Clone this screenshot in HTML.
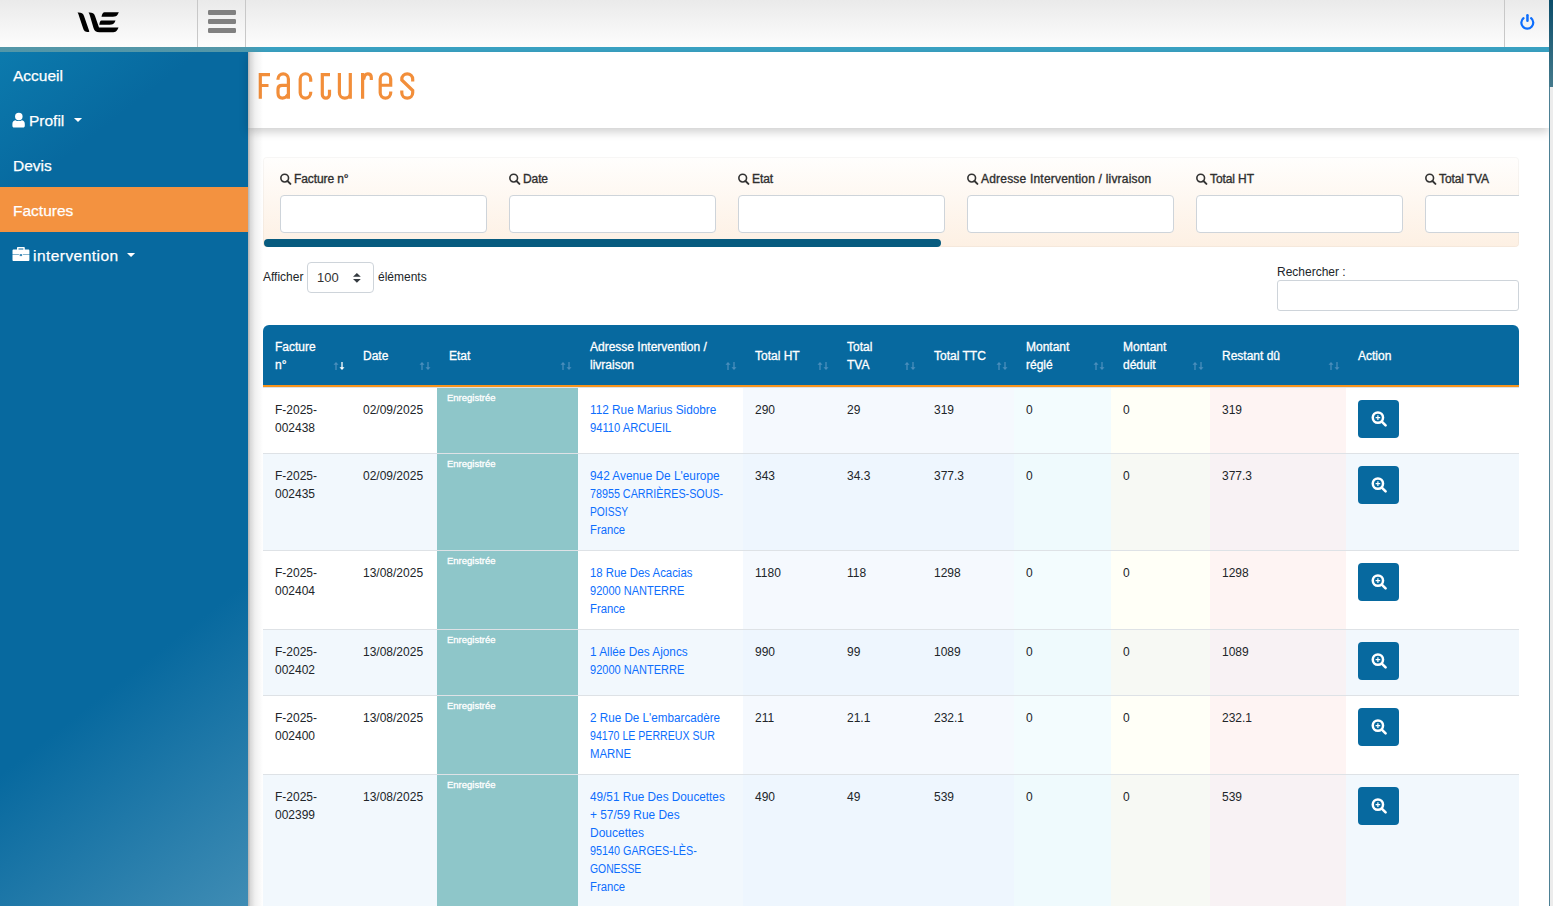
<!DOCTYPE html>
<html><head><meta charset="utf-8">
<style>
*{box-sizing:border-box;margin:0;padding:0}
html,body{width:1553px;height:906px;overflow:hidden;background:#fff;font-family:"Liberation Sans",sans-serif;color:#212529;position:relative}
.a{position:absolute}
#top{left:0;top:0;width:1549px;height:47px;background:linear-gradient(#eaeaea,#fdfdfd)}
.vsep{top:0;width:1px;height:47px;background:#c8c8c8}
.hb{left:208px;width:28px;height:5px;border-radius:1.2px;background:#808080}
#tline{left:0;top:47px;width:1549px;height:5px;background:#3aa2c3}
#side{left:0;top:52px;width:248px;height:854px;background:linear-gradient(142deg,#0c7aad 0%,#07699f 15%,#07699f 69%,#3f8cb4 100%)}
.mi{left:0;width:248px;height:45px;color:#fff;font-size:15.5px;-webkit-text-stroke:0.25px #fff;line-height:45px;padding-left:13px;white-space:nowrap}
#scroll{left:1549px;top:0;width:4px;height:906px;background:#ececec;border-left:1px solid #4d8094}
#thumb{left:1549px;top:0;width:4px;height:87px;background:linear-gradient(#0b4d6a,#457a8c)}
#titlep{left:248px;top:52px;width:1301px;height:76px;background:#fff;box-shadow:0 4px 9px rgba(0,0,0,.19)}
#shadowL{left:248px;top:52px;width:16px;height:854px;background:linear-gradient(90deg,rgba(0,0,0,.3) 0,rgba(0,0,0,.15) 2.5px,rgba(0,0,0,.06) 7px,rgba(0,0,0,0) 15px)}
#filt{left:263px;top:157px;width:1256px;height:90px;background:linear-gradient(#fffefd,#fdf0e3);border-radius:4px;overflow:hidden;box-shadow:inset 0 0 0 1px rgba(0,0,0,.03)}
.flab{top:171px;font-size:12px;color:#2f2f2f;-webkit-text-stroke:0.35px #2f2f2f;letter-spacing:-0.1px;white-space:nowrap;height:16px;line-height:16px}
.finp{top:195px;width:207px;height:38px;background:#fff;border:1px solid #ced4da;border-radius:4px}
#hscroll{left:264px;top:239px;width:677px;height:8px;border-radius:4px;background:#075b7f}
.txt{font-size:12px;white-space:nowrap}
#sel{left:307px;top:262px;width:67px;height:31px;border:1px solid #ced4da;border-radius:4px;background:#fff}
#srch{left:1277px;top:280px;width:242px;height:31px;border:1px solid #ced4da;border-radius:3px;background:#fff}
#thead{left:263px;top:325px;width:1256px;height:60px;background:#07699f;border-radius:6px 6px 0 0}
#oline{left:263px;top:385px;width:1256px;height:2px;background:#f7941d}
.th{top:326px;height:60px;color:#fff;font-size:12px;-webkit-text-stroke:0.3px #fff;line-height:18px;display:flex;align-items:center;white-space:nowrap}
.sort{top:361px;font-size:11px;color:#5d9cc6;letter-spacing:-2px}
.row{left:263px;width:1256px;border-top:1px solid #dde3ea}
.cell{font-size:12px;line-height:18px;white-space:nowrap}
.lnk{color:#0d6efd}
.etat{width:141px;background:#8ec6c9;color:#fff;font-size:9.5px;-webkit-text-stroke:0.3px #fff;padding:3px 0 0 10px;line-height:13px}
.btn{width:41px;height:38px;background:#07699f;border-radius:4px}
</style></head><body>
<div class="a" id="top"></div>
<div class="a vsep" style="left:197px"></div>
<div class="a vsep" style="left:245px"></div>
<div class="a vsep" style="left:1504px"></div>
<div class="a hb" style="top:10px"></div>
<div class="a hb" style="top:19px"></div>
<div class="a hb" style="top:28px"></div>
<svg class="a" style="left:0;top:0" width="1553" height="47">
  <path d="M77.5,12.5 C81,12.3 83,13 84,16 L88.5,29 C89,31 90,32 88.5,32 C85,32 84,31 83,28 L79,16 C78.5,14 78,13 77.5,12.5Z" fill="#000"/>
  <path d="M88.5,12.5 C92,12.3 94,13 95,16 L99,27.5 L118.5,27.5 C117,31 116,32.2 112,32.2 L99.5,32.2 C96,32.2 94.5,31 93.5,28 L90,16 C89.5,14 89,13 88.5,12.5Z" fill="#000"/>
  <path d="M104.5,12.3 L118.8,12.3 C117.5,15.5 116.5,16.7 113,16.7 L101.5,16.7 C102,14 103,12.3 104.5,12.3Z" fill="#000"/>
  <path d="M101.5,20.6 L115.5,20.6 C114.3,23.6 113.3,24.7 110,24.7 L99.3,24.7 C99.8,22 100.3,20.6 101.5,20.6Z" fill="#000"/>
  <g fill="none" stroke="#0d6efd" stroke-width="2.2" stroke-linecap="round">
    <path d="M1523.5,18.1 A5.95,5.95 0 1 0 1531.1,18.1"/>
    <path d="M1527.45,15.2 V20.8" stroke-width="2.5"/>
  </g>
</svg>
<div class="a" id="tline"></div>
<div class="a" style="left:0;top:47px;width:270px;height:5px;background:linear-gradient(90deg,rgba(127,131,121,.36) 0,rgba(127,131,121,.36) 238px,rgba(127,131,121,0) 266px)"></div>
<div class="a" id="side"></div>
<div class="a mi" style="top:53px">Accueil</div>
<div class="a mi" style="top:98px;padding-left:29px">Profil</div>
<div class="a mi" style="top:143px">Devis</div>
<div class="a" style="left:0;top:187px;width:248px;height:45px;background:#f39240"></div>
<div class="a mi" style="top:188px">Factures</div>
<div class="a mi" style="top:233px;padding-left:33px;letter-spacing:0.45px">intervention</div>
<svg class="a" style="left:0;top:100px" width="248" height="170" viewBox="0 100 248 170">
  <g fill="#fff">
    <circle cx="18.8" cy="116.5" r="3.75"/>
    <path d="M15.3,120.3 C16.3,120.9 17.5,121.1 18.6,121.1 C19.7,121.1 20.9,120.9 22,120.3 C23.9,120.6 24.8,122 24.8,124 V125.9 C24.8,126.8 24.1,127.4 23.2,127.4 H14 C13.1,127.4 12.4,126.8 12.4,125.9 V124 C12.4,122 13.3,120.6 15.3,120.3Z"/>
    <path d="M73.9,117.9 H82.1 L78,122.1Z"/>
    <path d="M17,249.9 V248 C17,247.4 17.4,247 18,247 H23.8 C24.4,247 24.8,247.4 24.8,248 V249.9 H23.3 V248.4 H18.5 V249.9Z"/>
    <path d="M13.6,249.6 H28.3 C28.9,249.6 29.4,250.1 29.4,250.7 V254.1 H12.5 V250.7 C12.5,250.1 13,249.6 13.6,249.6Z"/>
    <path d="M12.5,254.5 H29.4 V260 C29.4,260.6 28.9,261 28.3,261 H13.6 C13,261 12.5,260.6 12.5,260Z"/>
    <rect x="18.9" y="253.4" width="4" height="3.4"/>
    <rect x="19.7" y="254.1" width="2.4" height="2" fill="#3f8ab8"/>
    <path d="M127,253 H135.1 L131.05,257.1Z"/>
  </g>
</svg>

<div class="a" id="titlep"></div>
<svg class="a" style="left:0;top:0" width="500" height="130">
  <g fill="none" stroke="#f28e3a" stroke-width="3.2" stroke-linejoin="miter">
    <path d="M260.3,98.8 V74.6 H270 M260.3,85.5 H268.5"/>
    <path d="M278,79.7 V79 A5.2,5.2 0 0 1 288.4,79 V98.8 M288.4,85.3 H282 Q278,85.3 278,89 V93 Q278,98.1 282.5,98.1 Q286,98.1 288.4,94"/>
    <path d="M310.7,81.7 V79 A5.25,5.25 0 0 0 300.2,79 V92.8 A5.25,5.25 0 0 0 310.7,92.8 V91.8"/>
    <path d="M322.3,73 V94.5 A3.6,3.6 0 0 0 329.5,94.5 V89.8 M322.3,74.6 H330"/>
    <path d="M339.4,73 V92.65 A5.45,5.45 0 0 0 350.3,92.65 M350.3,73 V98.8"/>
    <path d="M362.6,73 V98.8 M363.6,79.5 Q364.5,73.8 367.7,73.8 Q371.3,73.8 371.3,77.5 V80"/>
    <path d="M380.2,85.25 H390.7 V79 A5.25,5.25 0 0 0 380.2,79 V92.8 A5.25,5.25 0 0 0 390.7,92.8 V91.6"/>
    <path d="M412.7,81.4 V79.25 A5.45,5.45 0 0 0 401.8,79.25 V80 L412.7,90.5 V92.65 A5.45,5.45 0 0 1 401.8,92.65 V90.4"/>
  </g>
</svg>

<div class="a" id="filt"></div>
<svg class="a" style="left:280px;top:173px" width="12" height="12" viewBox="0 0 12 12"><circle cx="4.7" cy="5.1" r="3.85" fill="none" stroke="#333" stroke-width="1.6"/><path d="M7.5,8 L10.4,10.9" stroke="#333" stroke-width="1.9" stroke-linecap="round"/></svg>
<div class="a flab" style="left:294px">Facture n°</div>
<div class="a finp" style="left:280px;width:207px"></div>
<svg class="a" style="left:509px;top:173px" width="12" height="12" viewBox="0 0 12 12"><circle cx="4.7" cy="5.1" r="3.85" fill="none" stroke="#333" stroke-width="1.6"/><path d="M7.5,8 L10.4,10.9" stroke="#333" stroke-width="1.9" stroke-linecap="round"/></svg>
<div class="a flab" style="left:523px">Date</div>
<div class="a finp" style="left:509px;width:207px"></div>
<svg class="a" style="left:738px;top:173px" width="12" height="12" viewBox="0 0 12 12"><circle cx="4.7" cy="5.1" r="3.85" fill="none" stroke="#333" stroke-width="1.6"/><path d="M7.5,8 L10.4,10.9" stroke="#333" stroke-width="1.9" stroke-linecap="round"/></svg>
<div class="a flab" style="left:752px">Etat</div>
<div class="a finp" style="left:738px;width:207px"></div>
<svg class="a" style="left:967px;top:173px" width="12" height="12" viewBox="0 0 12 12"><circle cx="4.7" cy="5.1" r="3.85" fill="none" stroke="#333" stroke-width="1.6"/><path d="M7.5,8 L10.4,10.9" stroke="#333" stroke-width="1.9" stroke-linecap="round"/></svg>
<div class="a flab" style="left:981px;letter-spacing:0.2px">Adresse Intervention / livraison</div>
<div class="a finp" style="left:967px;width:207px"></div>
<svg class="a" style="left:1196px;top:173px" width="12" height="12" viewBox="0 0 12 12"><circle cx="4.7" cy="5.1" r="3.85" fill="none" stroke="#333" stroke-width="1.6"/><path d="M7.5,8 L10.4,10.9" stroke="#333" stroke-width="1.9" stroke-linecap="round"/></svg>
<div class="a flab" style="left:1210px">Total HT</div>
<div class="a finp" style="left:1196px;width:207px"></div>
<svg class="a" style="left:1425px;top:173px" width="12" height="12" viewBox="0 0 12 12"><circle cx="4.7" cy="5.1" r="3.85" fill="none" stroke="#333" stroke-width="1.6"/><path d="M7.5,8 L10.4,10.9" stroke="#333" stroke-width="1.9" stroke-linecap="round"/></svg>
<div class="a flab" style="left:1439px">Total TVA</div>
<div class="a finp" style="left:1425px;width:98px"></div>
<div class="a" style="left:1519px;top:157px;width:30px;height:90px;background:#fff"></div>

<div class="a" id="hscroll"></div>

<div class="a txt" style="left:263px;top:270px">Afficher</div>
<div class="a" id="sel"></div>
<div class="a txt" style="left:317px;top:270px;font-size:13px;color:#333">100</div>
<svg class="a" style="left:352px;top:272px" width="10" height="12" viewBox="0 0 10 12"><path d="M1,4.8 H8.8 L4.9,0.9Z M1,6.9 H8.8 L4.9,10.8Z" fill="#343a40"/></svg>
<div class="a txt" style="left:378px;top:270px">éléments</div>
<div class="a txt" style="left:1277px;top:265px">Rechercher :</div>
<div class="a" id="srch"></div>

<div class="a" id="thead"></div>
<div class="a" id="oline"></div>
<div class="a th" style="left:275px">Facture<br>n°</div>
<svg class="a" style="left:333px;top:361px" width="12" height="10" viewBox="0 0 12 10"><path d="M3,9 V2.6" stroke="#4a8ebc" stroke-width="1.3"/><path d="M0.5,3.7 L3,0.9 L5.5,3.7Z" fill="#4a8ebc"/><path d="M9,1 V7.4" stroke="#ffffff" stroke-width="1.3"/><path d="M6.5,6.3 L9,9.1 L11.5,6.3Z" fill="#ffffff"/></svg>
<div class="a th" style="left:363px">Date</div>
<svg class="a" style="left:419px;top:361px" width="12" height="10" viewBox="0 0 12 10"><path d="M3,9 V2.6" stroke="#4a8ebc" stroke-width="1.3"/><path d="M0.5,3.7 L3,0.9 L5.5,3.7Z" fill="#4a8ebc"/><path d="M9,1 V7.4" stroke="#4a8ebc" stroke-width="1.3"/><path d="M6.5,6.3 L9,9.1 L11.5,6.3Z" fill="#4a8ebc"/></svg>
<div class="a th" style="left:449px">Etat</div>
<svg class="a" style="left:560px;top:361px" width="12" height="10" viewBox="0 0 12 10"><path d="M3,9 V2.6" stroke="#4a8ebc" stroke-width="1.3"/><path d="M0.5,3.7 L3,0.9 L5.5,3.7Z" fill="#4a8ebc"/><path d="M9,1 V7.4" stroke="#4a8ebc" stroke-width="1.3"/><path d="M6.5,6.3 L9,9.1 L11.5,6.3Z" fill="#4a8ebc"/></svg>
<div class="a th" style="left:590px">Adresse Intervention /<br>livraison</div>
<svg class="a" style="left:725px;top:361px" width="12" height="10" viewBox="0 0 12 10"><path d="M3,9 V2.6" stroke="#4a8ebc" stroke-width="1.3"/><path d="M0.5,3.7 L3,0.9 L5.5,3.7Z" fill="#4a8ebc"/><path d="M9,1 V7.4" stroke="#4a8ebc" stroke-width="1.3"/><path d="M6.5,6.3 L9,9.1 L11.5,6.3Z" fill="#4a8ebc"/></svg>
<div class="a th" style="left:755px">Total HT</div>
<svg class="a" style="left:817px;top:361px" width="12" height="10" viewBox="0 0 12 10"><path d="M3,9 V2.6" stroke="#4a8ebc" stroke-width="1.3"/><path d="M0.5,3.7 L3,0.9 L5.5,3.7Z" fill="#4a8ebc"/><path d="M9,1 V7.4" stroke="#4a8ebc" stroke-width="1.3"/><path d="M6.5,6.3 L9,9.1 L11.5,6.3Z" fill="#4a8ebc"/></svg>
<div class="a th" style="left:847px">Total<br>TVA</div>
<svg class="a" style="left:904px;top:361px" width="12" height="10" viewBox="0 0 12 10"><path d="M3,9 V2.6" stroke="#4a8ebc" stroke-width="1.3"/><path d="M0.5,3.7 L3,0.9 L5.5,3.7Z" fill="#4a8ebc"/><path d="M9,1 V7.4" stroke="#4a8ebc" stroke-width="1.3"/><path d="M6.5,6.3 L9,9.1 L11.5,6.3Z" fill="#4a8ebc"/></svg>
<div class="a th" style="left:934px">Total TTC</div>
<svg class="a" style="left:996px;top:361px" width="12" height="10" viewBox="0 0 12 10"><path d="M3,9 V2.6" stroke="#4a8ebc" stroke-width="1.3"/><path d="M0.5,3.7 L3,0.9 L5.5,3.7Z" fill="#4a8ebc"/><path d="M9,1 V7.4" stroke="#4a8ebc" stroke-width="1.3"/><path d="M6.5,6.3 L9,9.1 L11.5,6.3Z" fill="#4a8ebc"/></svg>
<div class="a th" style="left:1026px">Montant<br>réglé</div>
<svg class="a" style="left:1093px;top:361px" width="12" height="10" viewBox="0 0 12 10"><path d="M3,9 V2.6" stroke="#4a8ebc" stroke-width="1.3"/><path d="M0.5,3.7 L3,0.9 L5.5,3.7Z" fill="#4a8ebc"/><path d="M9,1 V7.4" stroke="#4a8ebc" stroke-width="1.3"/><path d="M6.5,6.3 L9,9.1 L11.5,6.3Z" fill="#4a8ebc"/></svg>
<div class="a th" style="left:1123px">Montant<br>déduit</div>
<svg class="a" style="left:1192px;top:361px" width="12" height="10" viewBox="0 0 12 10"><path d="M3,9 V2.6" stroke="#4a8ebc" stroke-width="1.3"/><path d="M0.5,3.7 L3,0.9 L5.5,3.7Z" fill="#4a8ebc"/><path d="M9,1 V7.4" stroke="#4a8ebc" stroke-width="1.3"/><path d="M6.5,6.3 L9,9.1 L11.5,6.3Z" fill="#4a8ebc"/></svg>
<div class="a th" style="left:1222px">Restant dû</div>
<svg class="a" style="left:1328px;top:361px" width="12" height="10" viewBox="0 0 12 10"><path d="M3,9 V2.6" stroke="#4a8ebc" stroke-width="1.3"/><path d="M0.5,3.7 L3,0.9 L5.5,3.7Z" fill="#4a8ebc"/><path d="M9,1 V7.4" stroke="#4a8ebc" stroke-width="1.3"/><path d="M6.5,6.3 L9,9.1 L11.5,6.3Z" fill="#4a8ebc"/></svg>
<div class="a th" style="left:1358px">Action</div>

<div class="a" style="left:263px;top:387px;width:1256px;height:66px;background:#ffffff"></div>
<div class="a" style="left:743px;top:387px;width:92px;height:66px;background:#f5f9fe"></div>
<div class="a" style="left:835px;top:387px;width:87px;height:66px;background:#f5f9fe"></div>
<div class="a" style="left:922px;top:387px;width:92px;height:66px;background:#f5f9fe"></div>
<div class="a" style="left:1014px;top:387px;width:97px;height:66px;background:#f3fcfe"></div>
<div class="a" style="left:1111px;top:387px;width:99px;height:66px;background:#fffff7"></div>
<div class="a" style="left:1210px;top:387px;width:136px;height:66px;background:#fef4f3"></div>
<div class="a etat" style="left:437px;top:388px;height:65px">Enregistrée</div>
<div class="a" style="left:263px;top:387px;width:1256px;height:1px;background:#dee2e6"></div>
<div class="a cell" style="left:275px;top:401px">F-2025-<br>002438</div>
<div class="a cell" style="left:363px;top:401px">02/09/2025</div>
<div class="a cell lnk" style="left:590px;top:401px;transform:scaleX(0.9827);transform-origin:0 0">112 Rue Marius Sidobre</div>
<div class="a cell lnk" style="left:590px;top:419px;transform:scaleX(0.9327);transform-origin:0 0">94110 ARCUEIL</div>
<div class="a cell" style="left:755px;top:401px">290</div>
<div class="a cell" style="left:847px;top:401px">29</div>
<div class="a cell" style="left:934px;top:401px">319</div>
<div class="a cell" style="left:1026px;top:401px">0</div>
<div class="a cell" style="left:1123px;top:401px">0</div>
<div class="a cell" style="left:1222px;top:401px">319</div>
<div class="a btn" style="left:1358px;top:400px"></div>
<svg class="a" style="left:1358px;top:400px" width="41" height="38" viewBox="0 0 41 38"><circle cx="19.9" cy="17.6" r="5.15" fill="none" stroke="#fff" stroke-width="2.5"/><path d="M19.9,15.3 V19.9 M17.6,17.6 H22.2" stroke="#fff" stroke-width="1.2"/><path d="M23.8,21.6 L27.6,25.4" stroke="#fff" stroke-width="2.6" stroke-linecap="round"/></svg>
<div class="a" style="left:263px;top:453px;width:1256px;height:97px;background:#f2f8fd"></div>
<div class="a" style="left:743px;top:453px;width:92px;height:97px;background:#eef6fe"></div>
<div class="a" style="left:835px;top:453px;width:87px;height:97px;background:#eef6fe"></div>
<div class="a" style="left:922px;top:453px;width:92px;height:97px;background:#eef6fe"></div>
<div class="a" style="left:1014px;top:453px;width:97px;height:97px;background:#effafd"></div>
<div class="a" style="left:1111px;top:453px;width:99px;height:97px;background:#f7f9f4"></div>
<div class="a" style="left:1210px;top:453px;width:136px;height:97px;background:#f8f2f4"></div>
<div class="a etat" style="left:437px;top:454px;height:96px">Enregistrée</div>
<div class="a" style="left:263px;top:453px;width:1256px;height:1px;background:#dee2e6"></div>
<div class="a cell" style="left:275px;top:467px">F-2025-<br>002435</div>
<div class="a cell" style="left:363px;top:467px">02/09/2025</div>
<div class="a cell lnk" style="left:590px;top:467px;transform:scaleX(0.9854);transform-origin:0 0">942 Avenue De L'europe</div>
<div class="a cell lnk" style="left:590px;top:485px;transform:scaleX(0.8956);transform-origin:0 0">78955 CARRIÈRES-SOUS-</div>
<div class="a cell lnk" style="left:590px;top:503px;transform:scaleX(0.8548);transform-origin:0 0">POISSY</div>
<div class="a cell lnk" style="left:590px;top:521px;transform:scaleX(0.9395);transform-origin:0 0">France</div>
<div class="a cell" style="left:755px;top:467px">343</div>
<div class="a cell" style="left:847px;top:467px">34.3</div>
<div class="a cell" style="left:934px;top:467px">377.3</div>
<div class="a cell" style="left:1026px;top:467px">0</div>
<div class="a cell" style="left:1123px;top:467px">0</div>
<div class="a cell" style="left:1222px;top:467px">377.3</div>
<div class="a btn" style="left:1358px;top:466px"></div>
<svg class="a" style="left:1358px;top:466px" width="41" height="38" viewBox="0 0 41 38"><circle cx="19.9" cy="17.6" r="5.15" fill="none" stroke="#fff" stroke-width="2.5"/><path d="M19.9,15.3 V19.9 M17.6,17.6 H22.2" stroke="#fff" stroke-width="1.2"/><path d="M23.8,21.6 L27.6,25.4" stroke="#fff" stroke-width="2.6" stroke-linecap="round"/></svg>
<div class="a" style="left:263px;top:550px;width:1256px;height:79px;background:#ffffff"></div>
<div class="a" style="left:743px;top:550px;width:92px;height:79px;background:#f5f9fe"></div>
<div class="a" style="left:835px;top:550px;width:87px;height:79px;background:#f5f9fe"></div>
<div class="a" style="left:922px;top:550px;width:92px;height:79px;background:#f5f9fe"></div>
<div class="a" style="left:1014px;top:550px;width:97px;height:79px;background:#f3fcfe"></div>
<div class="a" style="left:1111px;top:550px;width:99px;height:79px;background:#fffff7"></div>
<div class="a" style="left:1210px;top:550px;width:136px;height:79px;background:#fef4f3"></div>
<div class="a etat" style="left:437px;top:551px;height:78px">Enregistrée</div>
<div class="a" style="left:263px;top:550px;width:1256px;height:1px;background:#dee2e6"></div>
<div class="a cell" style="left:275px;top:564px">F-2025-<br>002404</div>
<div class="a cell" style="left:363px;top:564px">13/08/2025</div>
<div class="a cell lnk" style="left:590px;top:564px;transform:scaleX(0.9476);transform-origin:0 0">18 Rue Des Acacias</div>
<div class="a cell lnk" style="left:590px;top:582px;transform:scaleX(0.918);transform-origin:0 0">92000 NANTERRE</div>
<div class="a cell lnk" style="left:590px;top:600px;transform:scaleX(0.9395);transform-origin:0 0">France</div>
<div class="a cell" style="left:755px;top:564px">1180</div>
<div class="a cell" style="left:847px;top:564px">118</div>
<div class="a cell" style="left:934px;top:564px">1298</div>
<div class="a cell" style="left:1026px;top:564px">0</div>
<div class="a cell" style="left:1123px;top:564px">0</div>
<div class="a cell" style="left:1222px;top:564px">1298</div>
<div class="a btn" style="left:1358px;top:563px"></div>
<svg class="a" style="left:1358px;top:563px" width="41" height="38" viewBox="0 0 41 38"><circle cx="19.9" cy="17.6" r="5.15" fill="none" stroke="#fff" stroke-width="2.5"/><path d="M19.9,15.3 V19.9 M17.6,17.6 H22.2" stroke="#fff" stroke-width="1.2"/><path d="M23.8,21.6 L27.6,25.4" stroke="#fff" stroke-width="2.6" stroke-linecap="round"/></svg>
<div class="a" style="left:263px;top:629px;width:1256px;height:66px;background:#f2f8fd"></div>
<div class="a" style="left:743px;top:629px;width:92px;height:66px;background:#eef6fe"></div>
<div class="a" style="left:835px;top:629px;width:87px;height:66px;background:#eef6fe"></div>
<div class="a" style="left:922px;top:629px;width:92px;height:66px;background:#eef6fe"></div>
<div class="a" style="left:1014px;top:629px;width:97px;height:66px;background:#effafd"></div>
<div class="a" style="left:1111px;top:629px;width:99px;height:66px;background:#f7f9f4"></div>
<div class="a" style="left:1210px;top:629px;width:136px;height:66px;background:#f8f2f4"></div>
<div class="a etat" style="left:437px;top:630px;height:65px">Enregistrée</div>
<div class="a" style="left:263px;top:629px;width:1256px;height:1px;background:#dee2e6"></div>
<div class="a cell" style="left:275px;top:643px">F-2025-<br>002402</div>
<div class="a cell" style="left:363px;top:643px">13/08/2025</div>
<div class="a cell lnk" style="left:590px;top:643px;transform:scaleX(0.9828);transform-origin:0 0">1 Allée Des Ajoncs</div>
<div class="a cell lnk" style="left:590px;top:661px;transform:scaleX(0.918);transform-origin:0 0">92000 NANTERRE</div>
<div class="a cell" style="left:755px;top:643px">990</div>
<div class="a cell" style="left:847px;top:643px">99</div>
<div class="a cell" style="left:934px;top:643px">1089</div>
<div class="a cell" style="left:1026px;top:643px">0</div>
<div class="a cell" style="left:1123px;top:643px">0</div>
<div class="a cell" style="left:1222px;top:643px">1089</div>
<div class="a btn" style="left:1358px;top:642px"></div>
<svg class="a" style="left:1358px;top:642px" width="41" height="38" viewBox="0 0 41 38"><circle cx="19.9" cy="17.6" r="5.15" fill="none" stroke="#fff" stroke-width="2.5"/><path d="M19.9,15.3 V19.9 M17.6,17.6 H22.2" stroke="#fff" stroke-width="1.2"/><path d="M23.8,21.6 L27.6,25.4" stroke="#fff" stroke-width="2.6" stroke-linecap="round"/></svg>
<div class="a" style="left:263px;top:695px;width:1256px;height:79px;background:#ffffff"></div>
<div class="a" style="left:743px;top:695px;width:92px;height:79px;background:#f5f9fe"></div>
<div class="a" style="left:835px;top:695px;width:87px;height:79px;background:#f5f9fe"></div>
<div class="a" style="left:922px;top:695px;width:92px;height:79px;background:#f5f9fe"></div>
<div class="a" style="left:1014px;top:695px;width:97px;height:79px;background:#f3fcfe"></div>
<div class="a" style="left:1111px;top:695px;width:99px;height:79px;background:#fffff7"></div>
<div class="a" style="left:1210px;top:695px;width:136px;height:79px;background:#fef4f3"></div>
<div class="a etat" style="left:437px;top:696px;height:78px">Enregistrée</div>
<div class="a" style="left:263px;top:695px;width:1256px;height:1px;background:#dee2e6"></div>
<div class="a cell" style="left:275px;top:709px">F-2025-<br>002400</div>
<div class="a cell" style="left:363px;top:709px">13/08/2025</div>
<div class="a cell lnk" style="left:590px;top:709px;transform:scaleX(0.9731);transform-origin:0 0">2 Rue De L'embarcadère</div>
<div class="a cell lnk" style="left:590px;top:727px;transform:scaleX(0.8825);transform-origin:0 0">94170 LE PERREUX SUR</div>
<div class="a cell lnk" style="left:590px;top:745px;transform:scaleX(0.9506);transform-origin:0 0">MARNE</div>
<div class="a cell" style="left:755px;top:709px">211</div>
<div class="a cell" style="left:847px;top:709px">21.1</div>
<div class="a cell" style="left:934px;top:709px">232.1</div>
<div class="a cell" style="left:1026px;top:709px">0</div>
<div class="a cell" style="left:1123px;top:709px">0</div>
<div class="a cell" style="left:1222px;top:709px">232.1</div>
<div class="a btn" style="left:1358px;top:708px"></div>
<svg class="a" style="left:1358px;top:708px" width="41" height="38" viewBox="0 0 41 38"><circle cx="19.9" cy="17.6" r="5.15" fill="none" stroke="#fff" stroke-width="2.5"/><path d="M19.9,15.3 V19.9 M17.6,17.6 H22.2" stroke="#fff" stroke-width="1.2"/><path d="M23.8,21.6 L27.6,25.4" stroke="#fff" stroke-width="2.6" stroke-linecap="round"/></svg>
<div class="a" style="left:263px;top:774px;width:1256px;height:146px;background:#f2f8fd"></div>
<div class="a" style="left:743px;top:774px;width:92px;height:146px;background:#eef6fe"></div>
<div class="a" style="left:835px;top:774px;width:87px;height:146px;background:#eef6fe"></div>
<div class="a" style="left:922px;top:774px;width:92px;height:146px;background:#eef6fe"></div>
<div class="a" style="left:1014px;top:774px;width:97px;height:146px;background:#effafd"></div>
<div class="a" style="left:1111px;top:774px;width:99px;height:146px;background:#f7f9f4"></div>
<div class="a" style="left:1210px;top:774px;width:136px;height:146px;background:#f8f2f4"></div>
<div class="a etat" style="left:437px;top:775px;height:145px">Enregistrée</div>
<div class="a" style="left:263px;top:774px;width:1256px;height:1px;background:#dee2e6"></div>
<div class="a cell" style="left:275px;top:788px">F-2025-<br>002399</div>
<div class="a cell" style="left:363px;top:788px">13/08/2025</div>
<div class="a cell lnk" style="left:590px;top:788px;transform:scaleX(0.9809);transform-origin:0 0">49/51 Rue Des Doucettes</div>
<div class="a cell lnk" style="left:590px;top:806px;transform:scaleX(0.991);transform-origin:0 0">+ 57/59 Rue Des</div>
<div class="a cell lnk" style="left:590px;top:824px;transform:scaleX(1.0);transform-origin:0 0">Doucettes</div>
<div class="a cell lnk" style="left:590px;top:842px;transform:scaleX(0.8995);transform-origin:0 0">95140 GARGES-LÈS-</div>
<div class="a cell lnk" style="left:590px;top:860px;transform:scaleX(0.8642);transform-origin:0 0">GONESSE</div>
<div class="a cell lnk" style="left:590px;top:878px;transform:scaleX(0.9395);transform-origin:0 0">France</div>
<div class="a cell" style="left:755px;top:788px">490</div>
<div class="a cell" style="left:847px;top:788px">49</div>
<div class="a cell" style="left:934px;top:788px">539</div>
<div class="a cell" style="left:1026px;top:788px">0</div>
<div class="a cell" style="left:1123px;top:788px">0</div>
<div class="a cell" style="left:1222px;top:788px">539</div>
<div class="a btn" style="left:1358px;top:787px"></div>
<svg class="a" style="left:1358px;top:787px" width="41" height="38" viewBox="0 0 41 38"><circle cx="19.9" cy="17.6" r="5.15" fill="none" stroke="#fff" stroke-width="2.5"/><path d="M19.9,15.3 V19.9 M17.6,17.6 H22.2" stroke="#fff" stroke-width="1.2"/><path d="M23.8,21.6 L27.6,25.4" stroke="#fff" stroke-width="2.6" stroke-linecap="round"/></svg>

<div class="a" id="shadowL"></div>
<div class="a" id="scroll"></div>
<div class="a" id="thumb"></div>
</body></html>
